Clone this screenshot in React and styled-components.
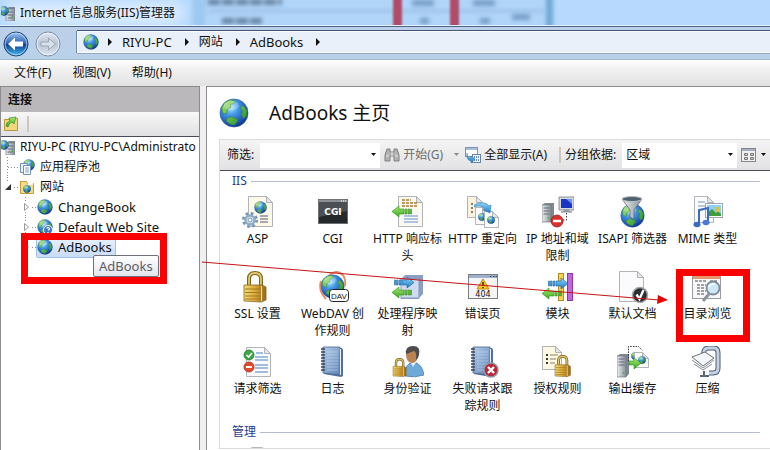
import styled, { createGlobalStyle, css } from 'styled-components';

const colors = {
  text: '#111111',
  muted: '#6d6d6d',
  line: '#8c8c90',
  darkLine: '#4a4a5a',
  blue: '#1e3c94',
  mark: '#fb0000',
};

const GlobalStyle = createGlobalStyle`
  * {
    box-sizing: border-box;
  }

  body {
    margin: 0;
    overflow: hidden;
    color: ${colors.text};
    font: 12px/20px 'Noto Sans', 'Noto Sans CJK SC', sans-serif;
  }

  button, input, select {
    padding: 0;
    border: 0;
    background: none;
    color: inherit;
    font: inherit;
  }

  ul, ol {
    margin: 0;
    padding: 0;
    list-style: none;
  }

  svg {
    display: block;
    flex: none;
  }
`;

/* ---------- window frame ---------- */

const Window = styled.div`
  height: 100vh;
  display: flex;
  flex-direction: column;
  background-color: #f0f0f0;
`;

const TitleBar = styled.header`
  position: relative;
  flex: none;
  height: 26px;
  display: flex;
  align-items: center;
  overflow: hidden;
  background-color: #b6d9fd;
  border-bottom: 1px solid #e4f0fc;
`;

const Backdrop = styled.svg`
  position: absolute;
  top: 0;
  left: 0;
`;

const Title = styled.h1`
  position: relative;
  margin: 0;
  display: flex;
  align-items: center;
  gap: 5px;
  padding-left: 1px;
  font-size: 12px;
  font-weight: 400;
  line-height: 24px;
  white-space: nowrap;
`;

const NavBar = styled.nav`
  flex: none;
  height: 34px;
  display: flex;
  padding: 4px 0 6px;
  background: linear-gradient(#bccfe8, #b8d2ea);
  border-top: 1px solid #4b668c;
  border-bottom: 1px solid #9fb8d4;
`;

const NavButtons = styled.div`
  width: 77px;
  height: 24px;
  display: flex;
  gap: 6px;
  padding-left: 3px;
`;

const NavButton = styled.button`
  height: 26px;
`;

const Crumbs = styled.ol`
  flex: 1;
  display: flex;
  align-items: center;
  padding-left: 5px;
  background-color: #eaf0fa;
  border: 1px solid #f8fbff;
  border-width: 1px 0 1px 1px;
  box-shadow: 0 -1px #445470, -1px 0 #6d87a8, 0 1px #93a9c2;
`;

const Crumb = styled.li`
  display: flex;
  align-items: center;
  gap: 11px;
  margin-right: 8px;

  &:first-child {
    gap: 7px;
  }
`;

const CrumbLink = styled.a`
  color: inherit;
  font-size: ${({ $latin }) => ($latin ? 13 : 12)}px;
  text-decoration: none;
`;

const MenuBar = styled.div`
  flex: none;
  height: 26px;
  display: flex;
  align-items: center;
  gap: 21px;
  padding-left: 14px;
  background: linear-gradient(#ffffff, #f2f2f2 30%, #e2e2e2);
`;

const Body = styled.div`
  flex: 1;
  min-height: 0;
  display: flex;
  gap: 6px;
`;

/* ---------- connections ---------- */

const Side = styled.aside`
  flex: none;
  width: 200px;
  border: 1px solid ${colors.line};
  border-bottom: 0;
  background-color: #ffffff;
`;

const SideTitle = styled.h2`
  margin: 0;
  padding-left: 7px;
  font-size: 12px;
  line-height: 25px;
  background-color: #bab8bb;
`;

const SideTools = styled.div`
  height: 25px;
  display: flex;
  align-items: center;
  gap: 8px;
  padding-left: 2px;
  background: linear-gradient(#f8f8f8, #e0e0e2);
  border-bottom: 1px solid ${colors.darkLine};
`;

const Separator = styled.span`
  width: 2px;
  height: 16px;
  background-color: #cdc6bb;
`;

const TreeRow = styled.li`
  position: relative;
  height: 20px;
  display: flex;
  padding-left: ${({ $indent = 0 }) => $indent}px;
  white-space: nowrap;
`;

const TreeLabel = styled.span`
  height: 20px;
  display: flex;
  align-items: center;
  gap: 5px;
  padding-right: 3px;
  font-size: ${({ $latin }) => ($latin ? 13 : 12)}px;
  ${({ $selected }) =>
    $selected &&
    css`
      background: linear-gradient(#e9f2fd, #c8dcf8);
      box-shadow: 0 0 0 1px #9fbfe8;
      border-radius: 1px;
    `}
`;

const Tooltip = styled.span`
  position: absolute;
  top: 18px;
  left: 92px;
  z-index: 2;
  padding: 0 5px;
  color: #5d5d63;
  font-size: 13px;
  background: linear-gradient(#ffffff, #e3e4ee);
  border: 1px solid #70707a;
  border-radius: 2px;
`;

const Mark = styled.span`
  position: absolute;
  top: ${({ $top }) => $top}px;
  left: ${({ $left }) => $left}px;
  width: ${({ $width }) => $width}px;
  height: ${({ $height }) => $height}px;
  border: 7px solid ${colors.mark};
  pointer-events: none;
`;

/* ---------- home page ---------- */

const Main = styled.main`
  position: relative;
  flex: 1;
  min-width: 0;
  display: flex;
  flex-direction: column;
  padding: 0 0 1px 12px;
  background-color: #ffffff;
  border: 1px solid ${colors.line};
  border-width: 1px 0 0 1px;
`;

const PageHead = styled.div`
  flex: none;
  height: 52px;
  display: flex;
  align-items: center;
  gap: 20px;
`;

const PageTitle = styled.h2`
  margin: 0;
  font-size: 19px;
  font-weight: 400;
`;

const Content = styled.section`
  flex: 1;
  min-height: 0;
  overflow: hidden;
  border: 1px solid #dcdcdc;
  border-right: 0;
`;

const FilterBar = styled.div`
  height: 31px;
  display: flex;
  align-items: center;
  padding-left: 7px;
  white-space: nowrap;
  background: linear-gradient(#f4f4f4, #e2e2e4);
  border-bottom: 1px solid ${colors.darkLine};
`;

const GroupLabel = styled.label`
  padding-left: 4px;
`;

const Combo = styled.span`
  width: ${({ $width }) => $width}px;
  height: 25px;
  display: grid;
  grid-template-columns: 1fr 10px;
  align-items: center;
  margin: 0 4px 0 6px;
  background-color: #ffffff;

  input, select {
    grid-area: 1 / 1 / 2 / 3;
    width: 100%;
    height: 25px;
    padding: 0 4px;
    appearance: none;
  }

  svg {
    grid-area: 1 / 2;
    pointer-events: none;
  }
`;

const ToolButton = styled.button`
  display: flex;
  align-items: center;
  gap: 3px;
  margin-right: ${({ $after = 0 }) => $after}px;
  color: ${({ disabled }) => (disabled ? colors.muted : 'inherit')};
`;

const GroupTitle = styled.h3`
  height: 20px;
  display: flex;
  align-items: center;
  gap: 4px;
  margin: 0;
  padding: 0 10px 0 12px;
  color: ${colors.blue};
  font-size: 12px;
  font-weight: 400;

  &::after {
    content: '';
    flex: 1;
    height: 1px;
    background-color: #b4bccf;
  }
`;

const Tiles = styled.ul`
  display: grid;
  grid-template-columns: repeat(auto-fill, 75px);
  grid-auto-rows: 75px;
  padding: 2px 0 4px;
`;

const Tile = styled.li`
  position: relative;
  display: flex;
  flex-direction: column;
  align-items: center;
  gap: 2px;
  padding: 3px 2px 0;
  line-height: 17px;
  text-align: center;
`;

const Arrow = styled.svg`
  position: absolute;
  top: 170px;
  left: -6px;
  z-index: 3;
  pointer-events: none;
`;

/* ---------- drawings ---------- */

const HiddenSvg = styled.svg`
  position: absolute;
`;

const Defs = () => (
  <HiddenSvg width="0" height="0" aria-hidden="true">
    <defs>
      <radialGradient id="sea" cx=".38" cy=".3" r=".75">
        <stop offset="0" stopColor="#b4ecff" />
        <stop offset=".35" stopColor="#459be8" />
        <stop offset=".8" stopColor="#1b50b2" />
        <stop offset="1" stopColor="#0c2c78" />
      </radialGradient>
      <linearGradient id="land" x2="1" y2="1">
        <stop offset="0" stopColor="#a4e36c" />
        <stop offset="1" stopColor="#1f8a2c" />
      </linearGradient>
      <linearGradient id="gold" x2="1">
        <stop offset="0" stopColor="#f5dc7c" />
        <stop offset=".5" stopColor="#d9a935" />
        <stop offset="1" stopColor="#94681b" />
      </linearGradient>
      <linearGradient id="steel" x2="1">
        <stop offset="0" stopColor="#eef1f3" />
        <stop offset="1" stopColor="#858e98" />
      </linearGradient>
      <linearGradient id="book" x2="1" y2="1">
        <stop offset="0" stopColor="#b5cdea" />
        <stop offset="1" stopColor="#5e83b8" />
      </linearGradient>
      <linearGradient id="lime" x2="0" y2="1">
        <stop offset="0" stopColor="#a7ec68" />
        <stop offset="1" stopColor="#35a822" />
      </linearGradient>
      <linearGradient id="sky" x2="0" y2="1">
        <stop offset="0" stopColor="#8fd8f8" />
        <stop offset="1" stopColor="#1a78c8" />
      </linearGradient>
      <linearGradient id="back" x2="0" y2="1">
        <stop offset="0" stopColor="#9fc3ef" />
        <stop offset=".48" stopColor="#2b64b8" />
        <stop offset=".52" stopColor="#0c3d94" />
        <stop offset="1" stopColor="#46c0f4" />
      </linearGradient>
      <linearGradient id="forward" x2="0" y2="1">
        <stop offset="0" stopColor="#dfe7f0" />
        <stop offset=".5" stopColor="#b9c6d6" />
        <stop offset="1" stopColor="#dde6ef" />
      </linearGradient>
      <filter id="soft" filterUnits="userSpaceOnUse" x="0" y="-20" width="770" height="70">
        <feGaussianBlur stdDeviation="2" />
      </filter>
      <filter id="edge" filterUnits="userSpaceOnUse" x="0" y="-20" width="770" height="70">
        <feGaussianBlur stdDeviation="1" />
      </filter>
      <filter id="glow" filterUnits="userSpaceOnUse" x="-30" y="-20" width="300" height="70">
        <feGaussianBlur stdDeviation="7" />
      </filter>
    </defs>
  </HiddenSvg>
);

const Globe = ({ x = 0, y = 0, size = 32 }) => (
  <g transform={`translate(${x} ${y}) scale(${size / 32})`}>
    <circle cx="16" cy="16" r="15" fill="url(#sea)" stroke="#2c5da8" strokeWidth=".6" />
    <path
      d="M3 10 6 5l6-3 5 1-1 3-4 1 1 3-4 2-1 5-4-1zM24 8l3 1 3 5-1 6-3 2-2-4 1-4-2-3zM8 22l5-2 6 2 1 3-4 4-4-1-4-3z"
      fill="url(#land)"
      stroke="#2b7e39"
      strokeWidth=".6"
    />
    <ellipse cx="13" cy="8" rx="8" ry="5" fill="#ffffff" opacity=".25" />
  </g>
);

const Svg = ({ size = 32, box = 32, children }) => (
  <svg width={size} height={size} viewBox={`0 0 ${box} ${box}`} aria-hidden="true">
    {children}
  </svg>
);

const GlobeIcon = ({ size = 16, help }) => (
  <Svg size={size}>
    <Globe />
    {help && (
      <>
        <circle cx="22" cy="22" r="9" fill="#3d75c9" stroke="#ffffff" strokeWidth="2" />
        <path d="M19 19q3-4 6 0q0 2-3 4M22 26v2" fill="none" stroke="#ffffff" strokeWidth="2.4" />
      </>
    )}
  </Svg>
);

const Tower = ({ x = 0, y = 0, height = 20 }) => (
  <g transform={`translate(${x} ${y})`}>
    <path d={`M0 2 3 0h9v${height - 3}l-3 3H0z`} fill="#808891" />
    <rect y="2" width="9" height={height - 2} fill="url(#steel)" stroke="#6f7780" strokeWidth=".7" />
    <path d="M1.5 5h6M1.5 8h6M1.5 11h6" stroke="#626b75" />
    <circle cx="6.5" cy={height - 4} r="1" fill="#45b94a" />
  </g>
);

const Page = ({ x = 0, y = 0, w = 24, h = 30, fill = '#fbfbfd' }) => (
  <g transform={`translate(${x} ${y})`}>
    <path d={`M.5.5h${w - 7}l6 6v${h - 7}h-${w - 1}z`} fill={fill} stroke="#a8abb0" strokeWidth=".9" />
    <path d={`M${w - 6.5}.5v6h6z`} fill="#e3e5e9" stroke="#a8abb0" strokeWidth=".9" />
  </g>
);

const Lock = ({ x = 0, y = 0, scale = 1 }) => (
  <g transform={`translate(${x} ${y}) scale(${scale})`}>
    <path d="M5 15V8q0-6 6-6t6 6v7" fill="none" stroke="#7c6223" strokeWidth="4" />
    <path d="M5 15V8q0-6 6-6t6 6v7" fill="none" stroke="#e3c86f" strokeWidth="1.8" />
    <path d="M0 14h18l4 2v13l-5 2-17-1z" fill="url(#gold)" stroke="#8a6420" strokeWidth=".8" />
    <path d="M1 18h16M1 21.5h16M1 25h16M1 28h16" stroke="#a47a22" />
    <path d="M17.5 15v15" stroke="#f8e39c" />
  </g>
);

const ArrowLeft = ({ x = 0, y = 0 }) => (
  <path
    transform={`translate(${x} ${y})`}
    d="M0 5.500 7 0v3h5v5H7v3zM13 3h2v5h-2zM16 3h1.500v5H16zM18.500 3h1v5h-1z"
    fill="url(#lime)"
    stroke="#338c22"
    strokeWidth=".6"
  />
);

const ArrowRight = ({ x = 0, y = 0 }) => (
  <path
    transform={`translate(${x} ${y})`}
    d="M20 5.500 13 0v3H8v5h5v3zM7 3H5v5h2zM4 3H2.500v5H4zM1.500 3h-1v5h1z"
    fill="url(#sky)"
    stroke="#1767a8"
    strokeWidth=".6"
  />
);

const Notebook = () => (
  <>
    <path d="M7 2h18l1 2v26l-2 1L7 28z" fill="#4f6f9e" />
    <path d="M6 1h17v28L6 27z" fill="url(#book)" stroke="#48668f" strokeWidth=".8" />
    <path d="M10 6h11M10 9h11M10 12h11M10 15h11M10 18h11M10 21h11M10 24h11" stroke="#e1ebf7" strokeWidth=".7" opacity=".6" />
    <path d="M23.5 3v26" stroke="#eef2f7" />
    <path d="M4 3h4M4 6h4M4 9h4M4 12h4M4 15h4M4 18h4M4 21h4M4 24h4" stroke="#394758" strokeWidth="1.3" />
  </>
);

const icons = {
  asp: (
    <>
      <Page x={6} y={0} w={25} h={31} fill="#fdf9e7" />
      <Globe x={12} y={5} size={13} />
      <path d="M18 20h8M18 23h8M18 26h8" stroke="#505a78" />
      <circle cx="8" cy="24" r="6.5" fill="none" stroke="#7995b4" strokeWidth="3" strokeDasharray="2.6 2.5" />
      <circle cx="8" cy="24" r="4.5" fill="#dbe9f7" stroke="#8eabc9" strokeWidth="2.5" />
      <circle cx="8" cy="24" r="2" fill="#ffffff" stroke="#7894b2" />
    </>
  ),
  cgi: (
    <>
      <rect x="1.5" y="3.5" width="29" height="24" fill="#25282b" stroke="#6d7073" />
      <path d="M2 4h28v2H2z" fill="#8d9194" />
      <path d="M2 6h28v9L2 21z" fill="#4b4f53" />
      <path d="M24 5h1M26 5h1M28 5h1" stroke="#ffffff" />
      <text x="16" y="19" textAnchor="middle" fontFamily="DejaVu Sans" fontSize="9" fontWeight="700" fill="#ffffff">CGI</text>
    </>
  ),
  response: (
    <>
      <Page x={6} y={0} w={25} h={31} fill="#fcfaf0" />
      <path d="M10 4h9M10 7h16M10 10h16" stroke="#a97a2c" strokeWidth="1.3" strokeDasharray="3 1" />
      <path d="M12 20h14M12 23h14M12 26h14" stroke="#5b8fd0" />
      <ArrowLeft x={0} y={10} />
    </>
  ),
  redirect: (
    <>
      <Page x={0} y={0} w={16} h={22} fill="#fbf3df" />
      <path d="M4 8h2M4 12h2M4 16h2" stroke="#6d5a36" strokeWidth="1.5" />
      <Page x={8} y={11} w={14} h={18} />
      <Globe x={11} y={17} size={8} />
      <Page x={17} y={15} w={15} h={17} />
      <Globe x={20} y={20} size={8} />
      <path d="M7 9q10-5 15 1l2-1-1 8-7-3 2-1q-4-5-11-2" fill="url(#sky)" stroke="#2c81b8" strokeWidth=".6" />
    </>
  ),
  ip: (
    <>
      <Tower x={0} y={7} height={19} />
      <path d="M17 1h15v13H17z" fill="#d5dade" stroke="#767e86" strokeWidth=".8" />
      <path d="M19 3h11v9H19z" fill="#1935c4" />
      <path d="M24 3h6v5z" fill="#6e94f0" />
      <path d="M22 14h5v2h3H19h3z" fill="#9199a0" stroke="#9199a0" />
      <path d="M24.5 17v7h-4" fill="none" stroke="#33383d" strokeDasharray="1.5 1.5" />
      <circle cx="15" cy="25" r="6" fill="#d8322f" stroke="#97201e" strokeWidth=".8" />
      <path d="M11 25h8" stroke="#ffffff" strokeWidth="2.5" />
    </>
  ),
  isapi: (
    <>
      <Globe x={3} y={7} size={25} />
      <path d="M5 3 13 14v7l4 2v-9l8-11z" fill="url(#steel)" stroke="#5f6b77" strokeWidth=".8" />
      <ellipse cx="15" cy="3" rx="10" ry="2.5" fill="#51606f" stroke="#b6c0c9" />
    </>
  ),
  mime: (
    <>
      <Page x={2} y={0} w={20} h={27} />
      <path d="M6 6h7M6 10h7M6 14h5" stroke="#7893bd" />
      <rect x="13.5" y="7.5" width="17" height="14" fill="#fdfdfd" stroke="#9ca4ad" />
      <path d="M15 9h14v11H15z" fill="#8fd0f0" />
      <path d="M15 20v-3l5-4 4 4 2-2 3 3v2z" fill="#3f9d3c" />
      <path d="M23 11h4v5h-4z" fill="#d9c149" />
      <path d="M7 28V14l9-2v14" fill="none" stroke="#3a69c7" strokeWidth="2" />
      <ellipse cx="5" cy="28.5" rx="3.5" ry="2.8" fill="#3a69c7" />
      <ellipse cx="14" cy="26.5" rx="3.5" ry="2.8" fill="#4c7bd4" />
    </>
  ),
  ssl: <Lock x={2} y={0} />,
  webdav: (
    <>
      <Globe x={3} y={3} size={25} />
      <path d="M9 28Q1 20 4 10M12 4q8-6 14 0q3 4 2 11" fill="none" stroke="#e2703d" strokeWidth="2" opacity=".8" />
      <rect x="12.5" y="18.5" width="19" height="12" rx="3" fill="#ffffff" stroke="#222222" />
      <text x="22" y="28" textAnchor="middle" fontFamily="Liberation Sans" fontSize="8" fill="#111111">DAV</text>
    </>
  ),
  handler: (
    <>
      <path d="m9 8 4-4h18v19l-5 5H9z" fill="#8b9fc2" />
      <rect x="9" y="8" width="18" height="19" fill="#cfdcf0" stroke="#8197bc" />
      <ArrowRight x={2} y={6} />
      <ArrowLeft x={0} y={16} />
    </>
  ),
  error: (
    <>
      <rect x="1.5" y="3.5" width="29" height="24" fill="#f5f5f7" stroke="#7a7f86" />
      <path d="M2 4h28v3H2z" fill="#9fb2cb" />
      <path d="M23 5.500h1.500M26 5.500h1.500M28.500 5.500H30" stroke="#35496b" />
      <path d="m16 8 6 10H10z" fill="#fdc91f" stroke="#c78a10" strokeLinejoin="round" />
      <path d="M16 11v4M16 16v1.300" stroke="#2b2b2b" strokeWidth="1.5" />
      <text x="16" y="26" textAnchor="middle" fontFamily="DejaVu Sans" fontSize="8" fill="#111111">404</text>
    </>
  ),
  modules: (
    <>
      <rect x="16.5" y="2.5" width="5" height="27" fill="#f6d24e" stroke="#b48d22" />
      <rect x="25.5" y="2.5" width="5" height="27" fill="#c565dc" stroke="#8b359f" />
      <ArrowRight x={6} y={7} />
      <ArrowLeft x={0} y={17} />
    </>
  ),
  document: (
    <>
      <Page x={2} y={0} w={25} h={31} />
      <circle cx="23" cy="24" r="7.5" fill="#2b2d30" stroke="#a4a8ac" strokeWidth="1.5" />
      <path d="m19.500 23.500 3 4.500 4-9" fill="none" stroke="#ffffff" strokeWidth="2.3" />
    </>
  ),
  browse: (
    <>
      <rect x=".5" y="2.5" width="28" height="25" fill="#f7f7f8" stroke="#999da3" />
      <path d="M1 3h27v5H1z" fill="#e8956c" />
      <path d="M3 10h11M18 10h8M5 14h9M5 17h8M5 20h9M5 23h7" stroke="#484d55" strokeDasharray="3 1" />
      <path d="m17 23-6 7" stroke="#8d939b" strokeWidth="3" />
      <circle cx="21" cy="17" r="6.5" fill="#cfe8f8" stroke="#7c8b9c" strokeWidth="1.8" />
      <path d="M17 16q2-4 6-3" fill="none" stroke="#ffffff" strokeWidth="1.5" />
    </>
  ),
  filtering: (
    <>
      <Page x={4} y={1} w={25} h={30} />
      <path d="M14 7h7M13 11h13M13 14h13M13 19h13M13 22h13M13 26h13" stroke="#4784c4" strokeWidth="1.2" />
      <circle cx="7" cy="9" r="5" fill="#3da743" stroke="#1f7a2a" strokeWidth=".8" />
      <path d="m4.500 9 2 2 3.500-4" fill="none" stroke="#ffffff" strokeWidth="1.6" />
      <circle cx="7" cy="21" r="5" fill="#e34a2b" stroke="#a92a18" strokeWidth=".8" />
      <path d="M4 21h6" stroke="#ffffff" strokeWidth="2" />
    </>
  ),
  log: <Notebook />,
  auth: (
    <>
      <path d="M13 30q-1-12 8-14 9 1 11 13-9 3-19 1" fill="#6fa9da" stroke="#457cae" strokeWidth=".8" />
      <path d="m18 15 3 6 4-6" fill="#e3f0fa" />
      <ellipse cx="20" cy="9" rx="6" ry="8" fill="#b98352" />
      <path d="M14 8q-1-8 7-8t6 9q-1 4-3 5 1-8-2-9-5 2-8 3" fill="#4b4c4b" />
      <Lock x={1} y={12} scale={0.6} />
    </>
  ),
  failed: (
    <>
      <Notebook />
      <circle cx="24" cy="24" r="7" fill="#b8283a" stroke="#8d98a2" strokeWidth="1.5" />
      <path d="m21 21 6 6M27 21l-6 6" stroke="#ffffff" strokeWidth="2.4" />
    </>
  ),
  rules: (
    <>
      <Page x={0} y={0} w={20} h={24} fill="#fdf8e4" />
      <path d="M4 9h2M4 13h2M4 17h2" stroke="#3a3a3a" strokeWidth="1.8" />
      <path d="M8 9h8M8 13h6M8 17h5" stroke="#8a7e5a" />
      <Lock x={13} y={9} scale={0.7} />
    </>
  ),
  cache: (
    <>
      <Tower x={0} y={8} height={23} />
      <path d="M11.5 15V.5h10l4 4" fill="none" stroke="#333333" strokeDasharray="1.5 1.2" />
      <Globe x={14} y={6} size={8} />
      <Page x={17} y={6} w={15} h={16} />
      <Globe x={21} y={10} size={8} />
      <path d="M12 15h5v-3l7 5-7 6v-4h-5z" fill="url(#lime)" stroke="#2b8a22" strokeWidth=".6" />
    </>
  ),
  compress: (
    <>
      <path d="M12 8q-1-6 5-6h5q4 0 4 5v15q0 5-5 5h-4" fill="none" stroke="#4d5c75" strokeWidth="5" />
      <path d="M12 8q-1-6 5-6h5q4 0 4 5v15q0 5-5 5h-4" fill="none" stroke="#c5d2e3" strokeWidth="3" />
      <path d="m0 11 13-5 9 6-11 8z" fill="#f5f6f7" stroke="#696f78" />
      <path d="m0 14 11 8 11-8M2 18l9 6 9-6" fill="none" stroke="#858c94" />
      <path d="M8 30h9M12 25v5" stroke="#5b6779" strokeWidth="2" />
    </>
  ),
  key: <rect x="8" y="0" width="14" height="28" rx="3" fill="#b3b6ba" />,
};

const ServerIcon = () => (
  <svg width="14" height="16" viewBox="2 0 14 16" aria-hidden="true">
    <Tower x={7} y={2} height={14} />
    <Globe x={0} y={1} size={10} />
  </svg>
);

const PoolIcon = () => (
  <Svg size={16} box={16}>
    <Globe x={4} y={0} size={12} />
    <path d="M1.5 4.500h7v9h-7z" fill="#eef4fc" stroke="#6f8fbb" />
    <path d="M4.5 6.500h7v9h-7z" fill="#ffffff" stroke="#6f8fbb" />
    <path d="M6 9h4M6 11h4M6 13h4" stroke="#7f9fca" />
  </Svg>
);

const FolderIcon = () => (
  <Svg size={16} box={16}>
    <path d="M1.5 2.500h6l1 2h6v10h-13z" fill="#f7dc84" stroke="#c69c3a" />
    <path d="M9 3h5v3H9z" fill="#fffdf0" />
    <Globe x={4} y={6} size={8} />
  </Svg>
);

const ConnectIcon = () => (
  <Svg size={16} box={16}>
    <path d="M1.5 3.500h7l1-1h5v12h-13z" fill="#f3d77c" stroke="#b99540" />
    <path d="M3 10q0-4 4-5L6 2l7-1-2 7-2-2q-3 1-4 5z" fill="url(#lime)" stroke="#3f8f2c" strokeWidth=".7" />
  </Svg>
);

const FindIcon = () => (
  <Svg size={16} box={16}>
    <path d="M3 2h3v3h4V2h3l2 6v6h-5V9H6v5H1V8z" fill="#b3b3b3" stroke="#808080" />
    <path d="M2 9h3M11 9h3M8 5v4" stroke="#ededed" />
  </Svg>
);

const ShowAllIcon = () => (
  <Svg size={16} box={16}>
    <rect x=".5" y=".5" width="12" height="9" fill="#ffffff" stroke="#7794b8" />
    <path d="M1 2h11" stroke="#a6bddb" strokeWidth="2" />
    <rect x="7.5" y="7.5" width="8" height="8" fill="#eef3f9" stroke="#6984a8" />
    <path d="M9 10h1M11 10h1M13 10h1M9 13h1M11 13h1M13 13h1" stroke="#426ea6" strokeWidth="1.5" />
    <path d="M2 6q0 5 4 5V9l4 3-4 4v-2q-5-1-4-8" fill="url(#sky)" stroke="#1c6fae" strokeWidth=".5" />
  </Svg>
);

const ViewIcon = () => (
  <Svg size={16} box={16}>
    <rect x=".5" y="1.5" width="14" height="13" fill="#f4f1ea" stroke="#82868e" />
    <path d="M1 3h13" stroke="#a5afbf" strokeWidth="2" />
    <path d="M3.5 6.500h3v2h-3zM9.5 6.500h3v2h-3zM3.5 10.500h3v2h-3zM9.5 10.500h3v2h-3z" fill="#b9cae4" stroke="#7a7a80" />
  </Svg>
);

const Caret = ({ color = '#111111' }) => (
  <svg width="7" height="4" viewBox="0 0 7 4" aria-hidden="true">
    <path d="M1 0h5L3.5 3z" fill={color} />
  </svg>
);

const CrumbArrow = () => (
  <svg width="8" height="8" viewBox="0 0 8 8" aria-hidden="true">
    <path d="M2 0v8l4-4z" fill="#111111" />
  </svg>
);

// dotted branch lines in front of a tree node, with its twisty if it has one
const Branch = ({ twisty, last }) => (
  <svg width="18" height="20" viewBox="0 0 18 20" aria-hidden="true">
    <path
      d={`M6.5 0v${last ? 10 : 20}M7 10.500h11`}
      stroke="#8b8b8b"
      strokeDasharray="1 2"
    />
    {twisty && <rect x="3" y="5" width="8" height="10" fill="#ffffff" />}
    {twisty === 'open' && <path d="M10 7v6H4z" fill="#333333" />}
    {twisty === 'closed' && <path d="M5.5 6.500v7l4-3.500z" fill="#ffffff" stroke="#9a9a9a" />}
  </svg>
);

const TitleBackdrop = () => (
  <Backdrop width="770" height="26" aria-hidden="true">
    <rect x="192" y="-4" width="14" height="34" fill="#80b7e4" opacity=".45" filter="url(#soft)" />
    <rect x="205" y="-4" width="340" height="34" fill="#a7cdf2" opacity=".3" filter="url(#soft)" />
    <path d="M208 11h336" stroke="#7fa5cc" strokeWidth="2" opacity=".6" filter="url(#soft)" />
    <path d="M208 2h74M222 21h42" stroke="#4a627f" strokeWidth="6" strokeDasharray="12 2" opacity=".7" filter="url(#soft)" />
    <path d="M412 3h22M473 3h22M420 21h9M480 21h10M512 17h18" stroke="#5f86b2" strokeWidth="6" opacity=".7" filter="url(#soft)" />
    <rect x="546" y="-4" width="7" height="34" fill="#5b9bc9" opacity=".8" filter="url(#soft)" />
    <rect x="393" y="-4" width="9" height="34" fill="#b04c68" filter="url(#edge)" />
    <rect x="450" y="-4" width="9" height="34" fill="#b04c68" filter="url(#edge)" />
    <rect x="8" y="4" width="174" height="18" fill="#f5faff" opacity=".75" filter="url(#glow)" />
  </Backdrop>
);

/* ---------- data ---------- */

const crumbs = [
  { text: 'RIYU-PC', latin: true },
  { text: '网站' },
  { text: 'AdBooks', latin: true },
];

const features = [
  { icon: 'asp', name: 'ASP' },
  { icon: 'cgi', name: 'CGI' },
  { icon: 'response', name: 'HTTP 响应标头' },
  { icon: 'redirect', name: 'HTTP 重定向' },
  { icon: 'ip', name: 'IP 地址和域限制' },
  { icon: 'isapi', name: 'ISAPI 筛选器' },
  { icon: 'mime', name: 'MIME 类型' },
  { icon: 'ssl', name: 'SSL 设置' },
  { icon: 'webdav', name: 'WebDAV 创作规则' },
  { icon: 'handler', name: '处理程序映射' },
  { icon: 'error', name: '错误页' },
  { icon: 'modules', name: '模块' },
  { icon: 'document', name: '默认文档' },
  { icon: 'browse', name: '目录浏览', marked: true },
  { icon: 'filtering', name: '请求筛选' },
  { icon: 'log', name: '日志' },
  { icon: 'auth', name: '身份验证' },
  { icon: 'failed', name: '失败请求跟踪规则' },
  { icon: 'rules', name: '授权规则' },
  { icon: 'cache', name: '输出缓存' },
  { icon: 'compress', name: '压缩' },
];

const Feature = ({ icon, name, marked }) => (
  <Tile>
    <Svg>{icons[icon]}</Svg>
    {name}
    {marked && <Mark $top={1} $left={6} $width={74} $height={73} />}
  </Tile>
);

const Connections = () => (
  <Side>
    <SideTitle>连接</SideTitle>
    <SideTools>
      <button aria-label="连接">
        <ConnectIcon />
      </button>
      <Separator />
    </SideTools>
    <ul>
      <TreeRow>
        <TreeLabel>
          <ServerIcon />
          RIYU-PC (RIYU-PC\Administrato
        </TreeLabel>
      </TreeRow>
      <TreeRow>
        <Branch />
        <TreeLabel>
          <PoolIcon />
          应用程序池
        </TreeLabel>
      </TreeRow>
      <TreeRow>
        <Branch twisty="open" last />
        <TreeLabel>
          <FolderIcon />
          网站
        </TreeLabel>
      </TreeRow>
      <TreeRow $indent={18}>
        <Branch twisty="closed" />
        <TreeLabel $latin>
          <GlobeIcon />
          ChangeBook
        </TreeLabel>
      </TreeRow>
      <TreeRow $indent={18}>
        <Branch twisty="closed" />
        <TreeLabel $latin>
          <GlobeIcon help />
          Default Web Site
        </TreeLabel>
      </TreeRow>
      <TreeRow $indent={18}>
        <Branch twisty="closed" last />
        <TreeLabel $latin $selected>
          <GlobeIcon />
          AdBooks
        </TreeLabel>
        <Tooltip role="tooltip">AdBooks</Tooltip>
        <Mark $top={-4} $left={20} $width={146} $height={51} />
      </TreeRow>
    </ul>
  </Side>
);

const App = () => {
  return (
    <Window>
      <GlobalStyle />
      <Defs />
      <TitleBar>
        <TitleBackdrop />
        <Title>
          <ServerIcon />
          Internet 信息服务(IIS)管理器
        </Title>
      </TitleBar>
      <NavBar>
        <NavButtons>
          <NavButton aria-label="后退">
            <Svg size={26} box={26}>
              <circle cx="13" cy="13" r="12" fill="url(#back)" stroke="#28456f" />
              <circle cx="13" cy="13" r="10.8" fill="none" stroke="#c5def6" opacity=".7" />
              <path d="M5 13 12 6.500v4h8v5h-8v4z" fill="#ffffff" />
            </Svg>
          </NavButton>
          <NavButton aria-label="前进">
            <Svg size={26} box={26}>
              <circle cx="13" cy="13" r="12" fill="url(#forward)" stroke="#7d8ea6" />
              <circle cx="13" cy="13" r="10.8" fill="none" stroke="#f3f7fb" opacity=".8" />
              <path d="M20.5 13 13.500 7v4H6v4h7.500v4z" fill="#d9e0e8" stroke="#98a5b5" />
            </Svg>
          </NavButton>
        </NavButtons>
        <Crumbs>
          <Crumb>
            <GlobeIcon />
            <CrumbArrow />
          </Crumb>
          {crumbs.map(({ text, latin }) => (
            <Crumb key={text}>
              <CrumbLink href="#" $latin={latin}>{text}</CrumbLink>
              <CrumbArrow />
            </Crumb>
          ))}
        </Crumbs>
      </NavBar>
      <MenuBar>
        <button>文件(F)</button>
        <button>视图(V)</button>
        <button>帮助(H)</button>
      </MenuBar>
      <Body>
        <Connections />
        <Main>
          <PageHead>
            <GlobeIcon size={30} />
            <PageTitle>AdBooks 主页</PageTitle>
          </PageHead>
          <Content>
            <FilterBar>
              <label htmlFor="filter">筛选:</label>
              <Combo $width={120}>
                <input id="filter" type="text" />
                <Caret />
              </Combo>
              <ToolButton disabled $after={10}>
                <FindIcon />
                开始(G)
              </ToolButton>
              <ToolButton disabled aria-label="开始选项" $after={5}>
                <Caret color="#8a8a8a" />
              </ToolButton>
              <ToolButton $after={12}>
                <ShowAllIcon />
                全部显示(A)
              </ToolButton>
              <Separator />
              <GroupLabel htmlFor="group">分组依据:</GroupLabel>
              <Combo $width={115}>
                <select id="group">
                  <option>区域</option>
                </select>
                <Caret />
              </Combo>
              <ToolButton aria-label="视图">
                <ViewIcon />
                <Caret />
              </ToolButton>
            </FilterBar>
            <GroupTitle>IIS</GroupTitle>
            <Tiles>
              {features.map((feature) => (
                <Feature key={feature.icon} {...feature} />
              ))}
            </Tiles>
            <GroupTitle>管理</GroupTitle>
            <Tiles>
              <Feature icon="key" />
            </Tiles>
          </Content>
          <Arrow width="470" height="48" aria-hidden="true">
            <path d="M1 5 458 43" stroke="#c81414" fill="none" />
            <path d="M457 38 467 43 456 47z" fill="#e80000" />
          </Arrow>
        </Main>
      </Body>
    </Window>
  );
};

export default App;
